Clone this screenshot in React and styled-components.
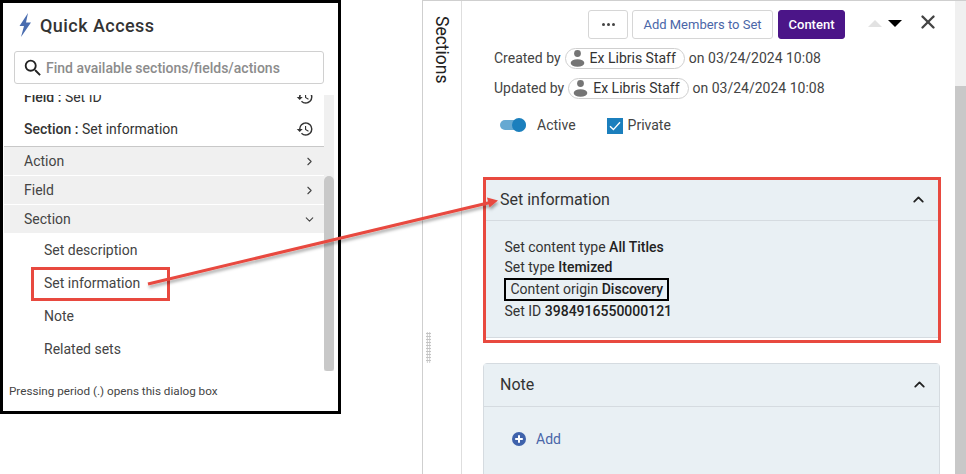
import React from "react";
import styled, { createGlobalStyle } from "styled-components";
import { ChevronDown, ChevronRight, ChevronUp, X } from "lucide-react";
import { MdHistory, MdSearch } from "react-icons/md";

const GlobalStyle = createGlobalStyle`
  html, body {
    margin: 0;
    padding: 0;
    background: #fff;
  }
  body {
    font-family: Roboto, "Liberation Sans", sans-serif;
    font-size: 14px;
    color: #333;
  }
  *, *::after {
    box-sizing: border-box;
  }
`;

const Page = styled.div`
  position: relative;
  display: flex;
  align-items: flex-start;
  width: 966px;
  height: 474px;
  overflow: hidden;
`;

/* quick access dialog */

const Dialog = styled.div`
  display: flex;
  flex-direction: column;
  flex: none;
  width: 341px;
  height: 414px;
  border: 3px solid #000;
  background: #fff;
`;

const DialogHeader = styled.div`
  display: flex;
  align-items: center;
  gap: 8px;
  height: 48px;
  padding: 0 0 4px 15px;
`;

const Title = styled.div`
  font-size: 18px;
  font-weight: 500;
  letter-spacing: 0.45px;
  color: #333;
`;

const SearchBox = styled.div`
  display: flex;
  align-items: center;
  gap: 2px;
  height: 33px;
  margin: 0 14px 0 11px;
  padding-left: 7px;
  border: 1px solid #d0d0d0;
  border-radius: 3px;
  color: #222;
`;

const Placeholder = styled.span`
  font-size: 14px;
  font-weight: 500;
  color: #8c8c8c;
`;

const ListFrame = styled.div`
  display: flex;
  height: 276px;
  margin: 11px 4px 0 1px;
  overflow: hidden;
`;

const List = styled.div`
  flex: 1;
  min-width: 0;
  margin-top: -15px;
`;

const Recent = styled.div`
  display: flex;
  align-items: center;
  justify-content: space-between;
  height: 33px;
  padding: 0 10px 0 20px;
  color: #333;
`;

const RecentLast = styled(Recent)`
  height: 34px;
  padding-bottom: 2px;
  border-bottom: 1px solid #c8c8c8;
`;

const RecentKind = styled.span`
  font-weight: 500;
`;

const Group = styled.div`
  display: flex;
  align-items: center;
  justify-content: space-between;
  height: 28px;
  margin-bottom: 1px;
  padding: 0 8px 0 20px;
  background: #f0f0f0;
  color: #444;
`;

const SubItem = styled.div`
  position: relative;
  display: flex;
  align-items: center;
  height: 33px;
  padding-left: 40px;
  color: #444;
  ${Group} + & {
    margin-top: -1px;
  }
  ${(p) =>
    p.$marked &&
    `
    &::after {
      content: "";
      position: absolute;
      left: 27px;
      top: 1px;
      width: 139px;
      height: 34px;
      border: 3px solid #e8493f;
    }
  `}
`;

const Track = styled.div`
  flex: none;
  width: 10px;
  padding-top: 81px;
  background: #f0f0f0;
`;

const Thumb = styled.div`
  height: 100%;
  border-radius: 5px 5px 3px 3px;
  background: #c8c8c8;
`;

const Footer = styled.div`
  flex: 1;
  display: flex;
  align-items: center;
  padding-left: 6px;
  font-size: 11.7px;
  color: #444;
`;

/* record panel */

const Panel = styled.div`
  flex: none;
  display: flex;
  width: 544px;
  height: 474px;
  margin-left: 81px;
  border-top: 1px solid #cfcfcf;
  border-left: 1px solid #cfcfcf;
`;

const Rail = styled.div`
  position: relative;
  flex: none;
  display: flex;
  justify-content: center;
  width: 39px;
  padding-top: 15px;
  border-right: 1px solid #dedede;
`;

const RailLabel = styled.div`
  writing-mode: vertical-rl;
  font-size: 17.5px;
  line-height: 20px;
  color: #222;
`;

const Grip = styled.div`
  position: absolute;
  left: 3px;
  top: 331px;
  width: 5px;
  height: 31px;
  background-image: radial-gradient(circle, #c4c4c4 1px, transparent 1.1px);
  background-size: 2.5px 3px;
`;

const Main = styled.div`
  flex: 1;
  min-width: 0;
  padding: 9px 13px 0 21px;
`;

const Toolbar = styled.div`
  display: flex;
  align-items: flex-start;
  height: 33px;
  padding-left: 105px;
`;

const Button = styled.div`
  display: flex;
  align-items: center;
  justify-content: center;
  height: 29px;
  width: ${(p) => p.$width}px;
  margin-right: ${(p) => p.$gap}px;
  border: 1px solid #d6d6d6;
  border-radius: 3px;
  font-size: 13px;
  color: #4a66a8;
`;

const PrimaryButton = styled(Button)`
  border-color: #4b1588;
  background: #4b1588;
  color: #fff;
  font-weight: 500;
`;

const Dots = styled.div`
  display: flex;
  gap: 2px;
  & > i {
    width: 3px;
    height: 3px;
    border-radius: 50%;
    background: #444;
  }
`;

const Triangle = styled.div`
  flex: none;
  width: 0;
  height: 0;
  margin: 10px 6px 0 0;
  border-left: 7px solid transparent;
  border-right: 7px solid transparent;
  ${(p) =>
    p.$down
      ? "border-top: 7px solid #000;"
      : "border-bottom: 7px solid #e2e2e2;"}
`;

const CloseIcon = styled(X)`
  margin: 1px 0 0 9px;
  color: #444;
`;

const MetaRow = styled.div`
  display: flex;
  align-items: center;
  gap: 4px;
  height: 30px;
  margin-left: 11px;
  color: #444;
`;

const Chip = styled.div`
  display: flex;
  align-items: center;
  gap: 5px;
  height: 21px;
  padding: 0 8px 0 4px;
  border: 1px solid #cfcfcf;
  border-radius: 11px;
  color: #333;
`;

const Options = styled.div`
  display: flex;
  align-items: center;
  height: 30px;
  margin: 7px 0 0 17px;
  color: #444;
`;

const Toggle = styled.div`
  position: relative;
  flex: none;
  width: 26px;
  height: 10px;
  margin-right: 11px;
  border-radius: 5px;
  background: #66a9d2;
  &::after {
    content: "";
    position: absolute;
    right: 0;
    top: -2px;
    width: 14px;
    height: 14px;
    border-radius: 50%;
    background: #1b7fbd;
  }
`;

const Checkbox = styled.div`
  flex: none;
  display: flex;
  align-items: center;
  justify-content: center;
  width: 16px;
  height: 16px;
  margin: 1px 5px 0 31px;
  background: #1b7fbd;
`;

const Card = styled.div`
  width: ${(p) => (p.$marked ? 458 : 457)}px;
  margin-top: ${(p) => p.$top}px;
  padding: ${(p) => (p.$marked ? "0 0 2px" : "0")};
  background: ${(p) => (p.$marked ? "#fff" : "#e9f0f4")};
  border: ${(p) => (p.$marked ? "3px solid #e8493f" : "1px solid #d5dbe0")};
  border-radius: ${(p) => (p.$marked ? "0" : "4px 4px 0 0")};
`;

const CardHeader = styled.div`
  display: flex;
  align-items: center;
  justify-content: space-between;
  height: ${(p) => p.$height}px;
  padding: 0 11px 2px ${(p) => p.$inset}px;
  border-bottom: 1px solid #d5dbe0;
  background: #e9f0f4;
  font-size: 16px;
  color: #333;
`;

const CardBody = styled.div`
  height: ${(p) => p.$height}px;
  padding: ${(p) => p.$padding};
  background: #e9f0f4;
  color: #333;
  ${(p) => p.$closed && "border-bottom: 1px solid #d5dbe0;"}
`;

const Line = styled.div`
  height: 20px;
  line-height: 20px;
  & > b {
    font-weight: 500;
    color: #222;
  }
`;

const BoxedLine = styled(Line)`
  display: inline-block;
  height: 23px;
  line-height: 19px;
  margin: 1px 0 0 -1px;
  padding: 0 4px 0 5px;
  border: 2px solid #000;
`;

const AddLink = styled.div`
  display: flex;
  align-items: center;
  gap: 10px;
  color: #4a66a8;
`;

const Scrollbar = styled.div`
  flex: none;
  width: 11px;
  padding-top: 85px;
  background: #f0f0f0;
  & > div {
    height: 100%;
    background: #c8c8c8;
  }
`;

const ArrowLayer = styled.svg`
  position: absolute;
  left: 0;
  top: 0;
  pointer-events: none;
`;

const BoltIcon = () => (
  <svg width="14" height="24" viewBox="0 0 14 24">
    <path d="M10 0 L1.5 13 L6 13 L3 24 L13 9.5 L8 9.5 Z" fill="#4a6db0" />
  </svg>
);

const PersonIcon = () => (
  <svg width="15" height="18" viewBox="0 0 15 18">
    <circle cx="7.5" cy="4.5" r="3.4" fill="#757575" />
    <ellipse cx="7.5" cy="14" rx="6.8" ry="3.8" fill="#757575" />
  </svg>
);

const CheckIcon = () => (
  <svg width="12" height="10" viewBox="0 0 12 10">
    <path d="M1 5.2 L4.4 8.6 L11 1.2" fill="none" stroke="#fff" strokeWidth="1.4" />
  </svg>
);

const AddIcon = () => (
  <svg width="14" height="14" viewBox="0 0 14 14">
    <circle cx="7" cy="7" r="7" fill="#3f62ab" />
    <path d="M7 3.2 V10.8 M3.2 7 H10.8" stroke="#fff" strokeWidth="2" />
  </svg>
);

const Arrow = () => (
  <ArrowLayer width="966" height="474" viewBox="0 0 966 474">
    <defs>
      <filter id="arrowShadow" x="-5%" y="-20%" width="110%" height="150%">
        <feDropShadow dx="1" dy="2.5" stdDeviation="1.6" floodColor="#000" floodOpacity="0.35" />
      </filter>
    </defs>
    <g filter="url(#arrowShadow)">
      <path d="M148 284 L490 202.5" stroke="#e8493f" strokeWidth="3" fill="none" />
      <path d="M498 200.5 L487 197.5 L489.5 207.5 Z" fill="#e8493f" />
    </g>
  </ArrowLayer>
);

export default function App() {
  return (
    <Page>
      <GlobalStyle />
      <Dialog>
        <DialogHeader>
          <BoltIcon />
          <Title>Quick Access</Title>
        </DialogHeader>
        <SearchBox>
          <MdSearch size={22} />
          <Placeholder>Find available sections/fields/actions</Placeholder>
        </SearchBox>
        <ListFrame>
          <List>
            <Recent>
              <span>
                <RecentKind>Field :</RecentKind> Set ID
              </span>
              <MdHistory size={18} />
            </Recent>
            <RecentLast>
              <span>
                <RecentKind>Section :</RecentKind> Set information
              </span>
              <MdHistory size={18} />
            </RecentLast>
            <Group>
              Action
              <ChevronRight size={13} />
            </Group>
            <Group>
              Field
              <ChevronRight size={13} />
            </Group>
            <Group>
              Section
              <ChevronDown size={13} />
            </Group>
            <SubItem>Set description</SubItem>
            <SubItem $marked>Set information</SubItem>
            <SubItem>Note</SubItem>
            <SubItem>Related sets</SubItem>
          </List>
          <Track>
            <Thumb />
          </Track>
        </ListFrame>
        <Footer>Pressing period (.) opens this dialog box</Footer>
      </Dialog>

      <Panel>
        <Rail>
          <RailLabel>Sections</RailLabel>
          <Grip />
        </Rail>
        <Main>
          <Toolbar>
            <Button $width={40} $gap={4}>
              <Dots>
                <i />
                <i />
                <i />
              </Dots>
            </Button>
            <Button $width={141} $gap={5}>Add Members to Set</Button>
            <PrimaryButton $width={67} $gap={23}>Content</PrimaryButton>
            <Triangle />
            <Triangle $down />
            <CloseIcon size={22} strokeWidth={2.6} />
          </Toolbar>
          <MetaRow>
            Created by
            <Chip>
              <PersonIcon />
              Ex Libris Staff
            </Chip>
            on 03/24/2024 10:08
          </MetaRow>
          <MetaRow>
            Updated by
            <Chip>
              <PersonIcon />
              Ex Libris Staff
            </Chip>
            on 03/24/2024 10:08
          </MetaRow>
          <Options>
            <Toggle />
            Active
            <Checkbox>
              <CheckIcon />
            </Checkbox>
            Private
          </Options>
          <Card $marked $top={37}>
            <CardHeader $inset={14} $height={41}>
              Set information
              <ChevronUp size={17} strokeWidth={2.6} color="#222" />
            </CardHeader>
            <CardBody $closed $height={117} $padding="16px 0 0 18.5px">
              <Line>
                Set content type <b>All Titles</b>
              </Line>
              <Line>
                Set type <b>Itemized</b>
              </Line>
              <BoxedLine>
                Content origin <b>Discovery</b>
              </BoxedLine>
              <Line>
                Set ID <b>3984916550000121</b>
              </Line>
            </CardBody>
          </Card>
          <Card $top={20}>
            <CardHeader $inset={16} $height={43}>
              Note
              <ChevronUp size={17} strokeWidth={2.6} color="#222" />
            </CardHeader>
            <CardBody $height={70} $padding="24px 0 0 28px">
              <AddLink>
                <AddIcon />
                Add
              </AddLink>
            </CardBody>
          </Card>
        </Main>
        <Scrollbar>
          <div />
        </Scrollbar>
      </Panel>
      <Arrow />
    </Page>
  );
}
